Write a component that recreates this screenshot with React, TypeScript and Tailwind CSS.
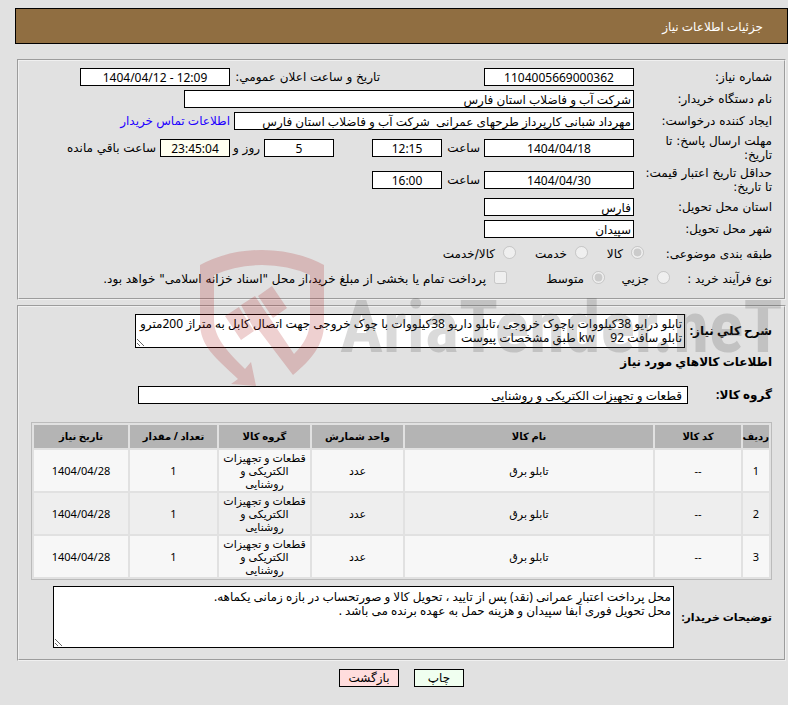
import clsx from "clsx";

const items = [
  { id: 1, code: "--", name: "تابلو برق", unit: "عدد", group: "قطعات و تجهیزات الکتریکی و روشنایی", qty: "1", date: "1404/04/28" },
  { id: 2, code: "--", name: "تابلو برق", unit: "عدد", group: "قطعات و تجهیزات الکتریکی و روشنایی", qty: "1", date: "1404/04/28" },
  { id: 3, code: "--", name: "تابلو برق", unit: "عدد", group: "قطعات و تجهیزات الکتریکی و روشنایی", qty: "1", date: "1404/04/28" },
];

const columns = [
  { title: "ردیف", width: "w-[26px]" },
  { title: "کد کالا", width: "w-[86px]" },
  { title: "نام کالا", width: "" },
  { title: "واحد شمارش", width: "w-[91px]" },
  { title: "گروه کالا", width: "w-[91px]" },
  { title: "تعداد / مقدار", width: "w-[87px]" },
  { title: "تاریخ نیاز", width: "w-[94px]" },
];

function Field({ id, value, dir, className }: { id: string; value: string; dir?: string; className?: string }) {
  return (
    <input
      id={id}
      type="text"
      dir={dir}
      readOnly
      defaultValue={value}
      className={clsx("h-[18px] border border-black px-0.5 font-['Noto_Sans','DejaVu_Sans',sans-serif] leading-4", className)}
    />
  );
}

function Row({ label, htmlFor, tall, children }: { label: string; htmlFor?: string; tall?: boolean; children: React.ReactNode }) {
  return (
    <div className={clsx("flex items-center", tall ? "h-8" : "h-[22px]")}>
      <label htmlFor={htmlFor} className="w-[138px] shrink-0 pl-2">{label}</label>
      <div className="flex items-center gap-1">{children}</div>
    </div>
  );
}

function Choice({ name, label, checked, className }: { name: string; label: string; checked?: boolean; className?: string }) {
  return (
    <label className={clsx("flex shrink-0 items-center gap-2", className)}>
      <input type="radio" name={name} defaultChecked={checked} disabled className="mb-1 size-[13px]" />
      {label}
    </label>
  );
}

function Watermark() {
  return (
    <svg className="pointer-events-none absolute top-[250px] left-[200px] [direction:ltr]" width="588" height="137" viewBox="200 250 588 137" aria-hidden="true">
      <g fill="#aa1414" fillOpacity="0.2">
        <path d="M200 265Q228 250 262 250Q296 250 324 265V324C324 345 311 360 293 375L258 329L255 331L241 305L255 296L294 354C304 344 310 334 310 320V275Q288 265 262 265Q236 265 214 275V320C214 338 228 352 245 369L251 362L256 386L231 384L238 379C214 356 200 346 200 322Z" />
        <path d="M225 316L239 307L240 309L254 331L241 340Z" />
        <path d="M258 296L272 286L287 308L273 318Z" />
      </g>
      <text x="340" y="352" fill="#464646" fillOpacity="0.2" className="font-['Roboto_Condensed','Roboto',sans-serif] text-[72px] font-bold">
        AriaTender.neT
      </text>
    </svg>
  );
}

export default function App() {
  return (
    <div dir="rtl" className="relative min-h-screen bg-[#e1e1e1] pt-2 pl-[15px] font-['Noto_Sans','DejaVu_Sans',sans-serif] text-[12px] leading-[14px] text-black [&_input]:bg-white [&_textarea]:bg-white">
      <header className="mb-[15px] flex h-9 items-center border border-black bg-[#906e41] pt-0.5 pr-6">
        <h1 className="text-white">جزئیات اطلاعات نیاز</h1>
      </header>

      <div className="mx-0.5">
        <fieldset className="mb-[5px] border-2 border-[#f0f0f0] pt-[5px] pr-3 pb-[7px] pl-3 font-['DejaVu_Sans',sans-serif] [border-style:groove]">
          <Row label="شماره نیاز:" htmlFor="need-no">
            <Field id="need-no" value="1104005669000362" className="w-[150px] text-center" />
            <label htmlFor="announce" className="mr-[100px] w-[146px] whitespace-nowrap">تاریخ و ساعت اعلان عمومي:</label>
            <Field id="announce" dir="ltr" value="1404/04/12 - 12:09" className="w-[150px] text-center" />
          </Row>
          <Row label="نام دستگاه خریدار:" htmlFor="org">
            <Field id="org" value="شرکت آب و فاضلاب استان فارس" className="w-[450px]" />
          </Row>
          <Row label="ایجاد کننده درخواست:" htmlFor="creator">
            <Field id="creator" value="مهرداد شبانی کارپرداز طرحهای عمرانی  شرکت آب و فاضلاب استان فارس" className="w-[400px]" />
            <a href="#contact" className="font-['Noto_Sans','DejaVu_Sans',sans-serif] text-[#2200ff]">اطلاعات تماس خریدار</a>
          </Row>
          <Row label="مهلت ارسال پاسخ: تا تاریخ:" htmlFor="reply-date" tall>
            <Field id="reply-date" value="1404/04/18" className="w-[150px] text-center" />
            <label htmlFor="reply-hour" className="w-[34px]">ساعت</label>
            <Field id="reply-hour" value="12:15" className="w-[70px] text-center" />
            <Field id="days" value="5" className="mr-[34px] w-[70px] text-center" />
            <label htmlFor="days" className="w-[26px] whitespace-nowrap">روز و</label>
            <Field id="remaining" value="23:45:04" className="w-[70px] bg-[#fffff0]! text-center" />
            <label htmlFor="remaining">ساعت باقي مانده</label>
          </Row>
          <Row label="حداقل تاریخ اعتبار قیمت: تا تاریخ:" htmlFor="valid-date" tall>
            <Field id="valid-date" value="1404/04/30" className="w-[150px] text-center" />
            <label htmlFor="valid-hour" className="w-[34px]">ساعت</label>
            <Field id="valid-hour" value="16:00" className="w-[70px] text-center" />
          </Row>
          <Row label="استان محل تحویل:" htmlFor="province">
            <Field id="province" value="فارس" className="w-[150px]" />
          </Row>
          <Row label="شهر محل تحویل:" htmlFor="city">
            <Field id="city" value="سپیدان" className="w-[150px]" />
          </Row>

          <div className="mt-0.5 flex h-6 items-center">
            <span className="w-[128px] shrink-0">طبقه بندی موضوعی:</span>
            <Choice name="category" label="کالا" checked className="w-14" />
            <Choice name="category" label="خدمت" className="w-[72px]" />
            <Choice name="category" label="کالا/خدمت" />
          </div>
          <div className="mt-px flex h-6 items-center">
            <span className="w-[102px] shrink-0 whitespace-nowrap">نوع فرآیند خرید :</span>
            <Choice name="process" label="جزيي" className="w-[65px]" />
            <Choice name="process" label="متوسط" checked className="w-[98px]" />
            <label className="flex items-center gap-2 whitespace-nowrap">
              <input type="checkbox" disabled className="mb-1 size-[13px]" />
              پرداخت تمام یا بخشی از مبلغ خرید،از محل "اسناد خزانه اسلامی" خواهد بود.
            </label>
          </div>
        </fieldset>

        <fieldset className="border-2 border-[#f0f0f0] pt-[7px] pr-3 pb-[11px] pl-3 [border-style:groove]">
          <div className="flex items-center">
            <label htmlFor="summary" className="w-[87px] shrink-0 font-bold whitespace-nowrap">شرح کلي نیاز:</label>
            <textarea
              id="summary"
              readOnly
              rows={2}
              className="block h-[34px] w-[550px] resize overflow-hidden border border-black p-0.5"
              defaultValue={"تابلو درایو 38کیلووات باچوک خروجی ،تابلو داریو 38کیلووات با چوک خروجی جهت اتصال کابل به متراژ 200مترو\nتابلو سافت 92     kw طبق مشخصات پیوست"}
            />
          </div>
          <h2 className="mt-[7px] font-bold">اطلاعات کالاهاي مورد نیاز</h2>
          <div className="mt-[17px] flex items-center">
            <label htmlFor="group" className="w-[84px] shrink-0 font-bold">گروه کالا:</label>
            <Field id="group" value="قطعات و تجهیزات الکتریکی و روشنایی" className="w-[550px] pr-[5px]" />
          </div>

          <table className="mt-[18px] w-full table-fixed border-separate border-spacing-[2px] border border-[#bbbbbb] text-center text-[11px] leading-[13px]">
            <thead>
              <tr className="h-[23px] bg-[#b4b4b4]">
                {columns.map((c) => (
                  <th key={c.title} className={clsx("p-0 text-[10px] font-bold whitespace-nowrap", c.width)}>{c.title}</th>
                ))}
              </tr>
            </thead>
            <tbody>
              {items.map((item) => (
                <tr key={item.id} className="bg-[#f7f7f7] even:bg-[#eeeeee]">
                  <td className="p-px">{item.id}</td>
                  <td className="p-px">{item.code}</td>
                  <td className="p-px">{item.name}</td>
                  <td className="p-px">{item.unit}</td>
                  <td className="px-1 py-px">{item.group}</td>
                  <td className="p-px">{item.qty}</td>
                  <td className="p-px">{item.date}</td>
                </tr>
              ))}
            </tbody>
          </table>

          <div className="mt-1.5 flex items-center">
            <label htmlFor="notes" className="w-[98px] shrink-0 text-[11px] font-bold whitespace-nowrap">توضیحات خریدار:</label>
            <textarea
              id="notes"
              readOnly
              rows={4}
              className="block h-[62px] w-[621px] resize overflow-hidden border border-black px-0.5 py-[3px]"
              defaultValue={"محل پرداخت اعتبار عمرانی (نقد) پس از تایید ، تحویل کالا و صورتحساب در بازه زمانی یکماهه.\nمحل تحویل فوری آبفا سپیدان و هزینه حمل به عهده برنده می باشد ."}
            />
          </div>
        </fieldset>
      </div>

      <div className="mt-2 flex justify-center gap-[15px]">
        <button type="button" className="h-[18px] w-[50px] border border-black bg-[#f0fff0]">چاپ</button>
        <button type="button" className="h-[18px] w-[60px] border border-black bg-[#ffdddd]">بازگشت</button>
      </div>

      <Watermark />
    </div>
  );
}
